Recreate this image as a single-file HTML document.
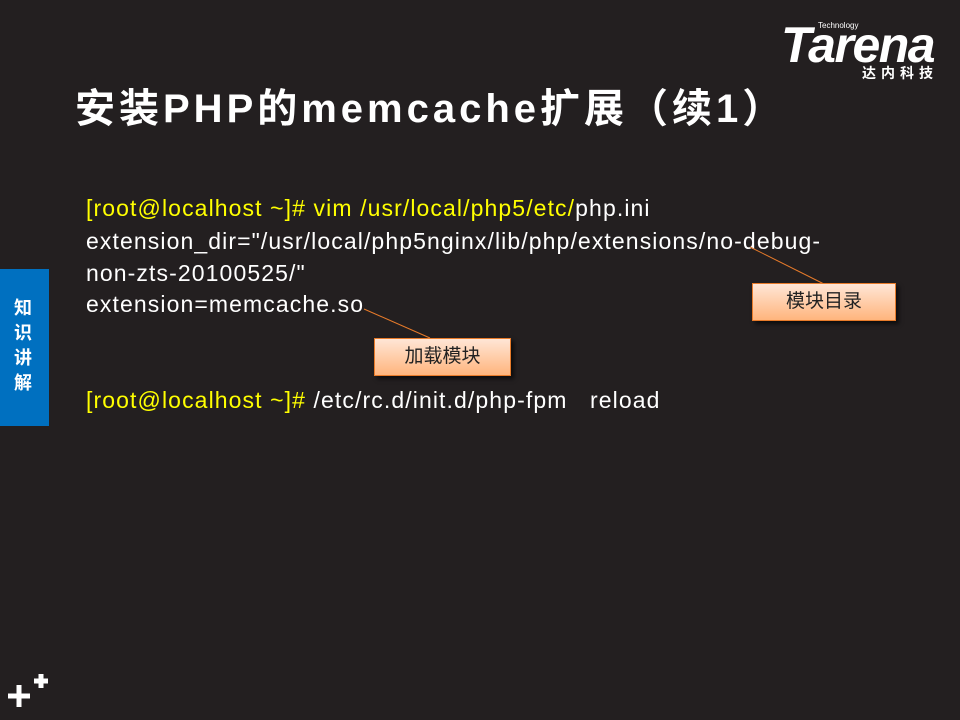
<!DOCTYPE html>
<html><head><meta charset="utf-8"><style>
body{margin:0;width:960px;height:720px;background:#231f20;position:relative;overflow:hidden;font-family:"Liberation Sans","Noto Sans CJK SC",sans-serif;color:#fff}
.a{position:absolute;white-space:nowrap}
.t{left:75px;top:76px;font-size:40px;font-weight:bold;letter-spacing:4px}
.l{left:86px;font-size:23px;line-height:26px;letter-spacing:1.1px}
.y{color:#ffff00}
.box{position:absolute;border:1px solid #e87b2a;background:linear-gradient(#ffe6d6,#ffb57d);color:#222;font-size:19px;text-align:center;box-shadow:3px 3px 4px rgba(0,0,0,.6)}
</style></head><body>
<div class="a t">安装PHP的memcache扩展（续1）</div>
<div class="a" style="left:781px;top:20px;font-size:50px;font-weight:bold;font-style:italic;letter-spacing:-1.5px;line-height:50px">Tarena</div>
<div class="a" style="left:818px;top:21px;font-size:8px">Technology</div>
<div class="a" style="left:862px;top:63px;font-size:14px;font-weight:bold;letter-spacing:5px">达内科技</div>
<div class="a" style="left:0;top:269px;width:49px;height:157px;background:#0070c0"></div>
<div class="a" style="left:14px;top:296px;font-size:18px;font-weight:bold;line-height:25px;white-space:normal;width:20px">知识讲解</div>
<div class="a l" style="top:195px"><span class="y">[root@localhost ~]# vim /usr/local/php5/etc/</span>php.ini</div>
<div class="a l" style="top:228px">extension_dir="/usr/local/php5nginx/lib/php/extensions/no-debug-</div>
<div class="a l" style="top:260px">non-zts-20100525/"</div>
<div class="a l" style="top:291px">extension=memcache.so</div>
<div class="a l" style="top:387px"><span class="y">[root@localhost ~]#</span> /etc/rc.d/init.d/php-fpm &nbsp;&nbsp;reload</div>
<svg class="a" style="left:0;top:0" width="960" height="720"><line x1="750" y1="247" x2="824" y2="284" stroke="#e87b2a"/><line x1="364" y1="309" x2="430" y2="338" stroke="#e87b2a"/>
<path d="M8 696h22M19 685v22M34 681h14M41 674v14" stroke="#fff" stroke-width="5"/></svg>
<div class="box" style="left:752px;top:283px;width:142px;height:36px;line-height:36px">模块目录</div>
<div class="box" style="left:374px;top:338px;width:135px;height:36px;line-height:36px">加载模块</div>
</body></html>
